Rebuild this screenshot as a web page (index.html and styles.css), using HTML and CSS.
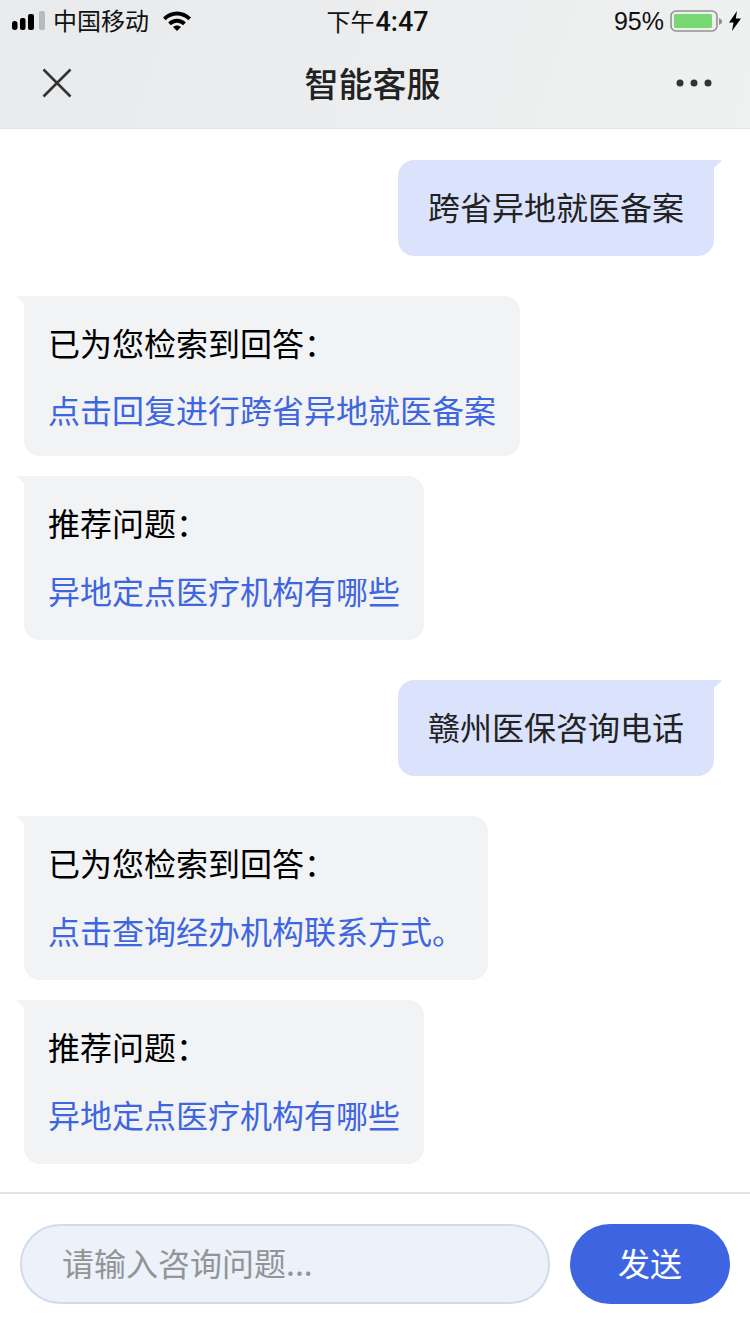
FILE: index.html
```html
<!DOCTYPE html>
<html lang="zh-CN">
    <head>
        <meta charset="UTF-8" />
        <meta name="viewport" content="width=device-width, initial-scale=1.0" />
        <title>智能客服</title>
        <link rel="stylesheet" href="styles.css">
    </head>
    <body>
        <header class="topbar">
            <div class="status">
                <div class="status-left">
                    <svg class="signal" width="33" height="22" viewBox="0 0 33 22">
                        <rect x="0" y="11" width="5.5" height="9" rx="2.7" fill="#000" />
                        <rect x="8" y="8" width="5.5" height="12" rx="2" fill="#000" />
                        <rect x="16" y="4" width="6" height="16" rx="2" fill="#000" />
                        <rect x="27" y="1" width="6" height="19" rx="2" fill="#b9babc" />
                    </svg>
                    <span class="carrier">中国移动</span>
                    <svg class="wifi" width="28" height="20" viewBox="0 0 28 20">
                        <path d="M0 6.5C7.500 -1.500 20.500 -1.500 28 6.500L25.300 9.200C19 3 9 3 2.700 9.200Z" fill="#000" />
                        <path d="M5.200 11.500C10 6.500 18 6.500 22.800 11.500L20.100 14.200C16.500 10.800 11.500 10.800 7.900 14.200Z" fill="#000" />
                        <path d="M10 16C12.300 14 15.700 14 18 16L14 20Z" fill="#000" />
                    </svg>
                </div>
                <div class="clock">下午<span class="clock-time">4:47</span></div>
                <div class="status-right">
                    <span class="percent">95%</span>
                    <svg class="battery" width="53" height="22" viewBox="0 0 53 22">
                        <rect x="1" y="1" width="46" height="20" rx="5" fill="none" stroke="#929292" stroke-width="1.600" />
                        <rect x="4" y="4" width="38" height="14" rx="1.500" fill="#78d974" />
                        <path d="M49 8L52 10V13L49 15Z" fill="#929292" />
                    </svg>
                    <svg class="bolt" width="12" height="20" viewBox="0 0 12 20">
                        <path d="M8 0L0 11.500H4.500L3 20L12 7.500H6.800Z" fill="#000" />
                    </svg>
                </div>
            </div>
            <div class="navbar">
                <svg class="nav-close" width="30" height="30" viewBox="0 0 30 30">
                    <path d="M1.500 1.500L28.500 28.500M28.500 1.500L1.500 28.500" stroke="#333" stroke-width="2.600" fill="none" />
                </svg>
                <h1 class="nav-title">智能客服</h1>
                <svg class="nav-more" width="36" height="8" viewBox="0 0 36 8">
                    <circle cx="4" cy="4" r="3.500" fill="#333" />
                    <circle cx="18" cy="4" r="3.500" fill="#333" />
                    <circle cx="32" cy="4" r="3.500" fill="#333" />
                </svg>
            </div>
        </header>

        <main class="chat">
            <div class="bubble user">跨省异地就医备案</div>

            <div class="group">
                <div class="bubble bot short">
                    <p class="label">已为您检索到回答：</p>
                    <a class="link">点击回复进行跨省异地就医备案</a>
                </div>
                <div class="bubble bot">
                    <p class="label">推荐问题：</p>
                    <a class="link">异地定点医疗机构有哪些</a>
                </div>
            </div>

            <div class="bubble user">赣州医保咨询电话</div>

            <div class="group">
                <div class="bubble bot">
                    <p class="label">已为您检索到回答：</p>
                    <a class="link">点击查询经办机构联系方式。</a>
                </div>
                <div class="bubble bot">
                    <p class="label">推荐问题：</p>
                    <a class="link">异地定点医疗机构有哪些</a>
                </div>
            </div>
        </main>

        <footer class="composer">
            <input class="composer-input" type="text" placeholder="请输入咨询问题..." />
            <button class="composer-send">发送</button>
        </footer>
    </body>
</html>
```

FILE: styles.css
```css
* {
    box-sizing: border-box;
}

body {
    font-family: "Noto Sans CJK SC", "Noto Sans", sans-serif;
    margin: 0;
    height: 1334px;
    display: flex;
    flex-direction: column;
    background: #fff;
    color: #222;
    overflow: hidden;
}

.topbar {
    height: 129px;
    flex: none;
    background: linear-gradient(110deg, #e9eaec, #eff0f0);
    border-bottom: 1px solid #e2e2e2;
}

.status {
    height: 42px;
    padding: 0 9px 0 12px;
    display: grid;
    grid-template-columns: 1fr auto 1fr;
    align-items: center;
    color: #111;
    font-size: 24px;
}

.status-left {
    display: flex;
    align-items: center;
}

.carrier {
    margin-left: 8px;
    padding-bottom: 2px;
    line-height: 40px;
}

.wifi {
    margin-left: 14px;
}

.clock {
    font-size: 24px;
    padding: 0 0 2px 2px;
}

.clock-time {
    font-family: Roboto, sans-serif;
    font-size: 27px;
    font-weight: 500;
    margin-left: 1px;
}

.status-right {
    display: flex;
    align-items: center;
    justify-content: flex-end;
}

.percent {
    font-family: "Liberation Sans", sans-serif;
    font-size: 25px;
    margin-right: 6px;
}

.bolt {
    margin-left: 6px;
}

.navbar {
    height: 86px;
    padding: 0 38px 4px 42px;
    display: flex;
    align-items: center;
    justify-content: space-between;
}

.nav-title {
    margin: 0 3px 0 0;
    font-size: 34px;
    font-weight: 500;
    color: #222;
    line-height: 1;
}

.chat {
    flex: 1;
    padding: 31px 36px 0 24px;
    display: flex;
    flex-direction: column;
    gap: 40px;
    font-size: 32px;
}

.group {
    display: flex;
    flex-direction: column;
    gap: 20px;
}

.bubble {
    position: relative;
    width: fit-content;
    border-radius: 16px;
    line-height: 48px;
}

.bubble::before {
    content: "";
    position: absolute;
    top: 0;
    width: 8px;
    height: 9px;
    background: inherit;
}

.user {
    align-self: flex-end;
    padding: 22px 30px;
    height: 96px;
    background: #dae3fb;
    border-top-right-radius: 0;
    color: #222;
}

.user::before {
    right: -8px;
    clip-path: path("M0 0H7Q8 0 7 1.500L0 8Z");
}

.bot {
    height: 164px;
    padding: 22px 24px 0 24px;
    background: #f2f3f5;
    border-top-left-radius: 0;
}

.bot.short {
    height: 160px;
}

.bot::before {
    left: -8px;
    clip-path: path("M1 0H8V8Q5 4 1 1Q0 0 1 0Z");
}

.label {
    margin: 0 0 20px;
    color: #000;
}

.short .label {
    margin-bottom: 19px;
}

.link {
    display: block;
    color: #3e66e0;
}

.composer {
    height: 142px;
    flex: none;
    border-top: 2px solid #e4e4e4;
    padding: 30px 20px 0;
    display: flex;
    gap: 20px;
}

.composer-input {
    width: 530px;
    height: 80px;
    padding: 0 40px 4px;
    font: inherit;
    font-size: 32px;
    background: #edf1fa;
    border: 2px solid #d2dbeb;
    border-radius: 40px;
    outline: none;
}

.composer-input::placeholder {
    color: #929497;
    opacity: 1;
}

.composer-send {
    width: 160px;
    height: 80px;
    padding: 0 0 4px;
    border: none;
    border-radius: 40px;
    background: #3e65e1;
    color: #fff;
    font: inherit;
    font-size: 32px;
}
```
